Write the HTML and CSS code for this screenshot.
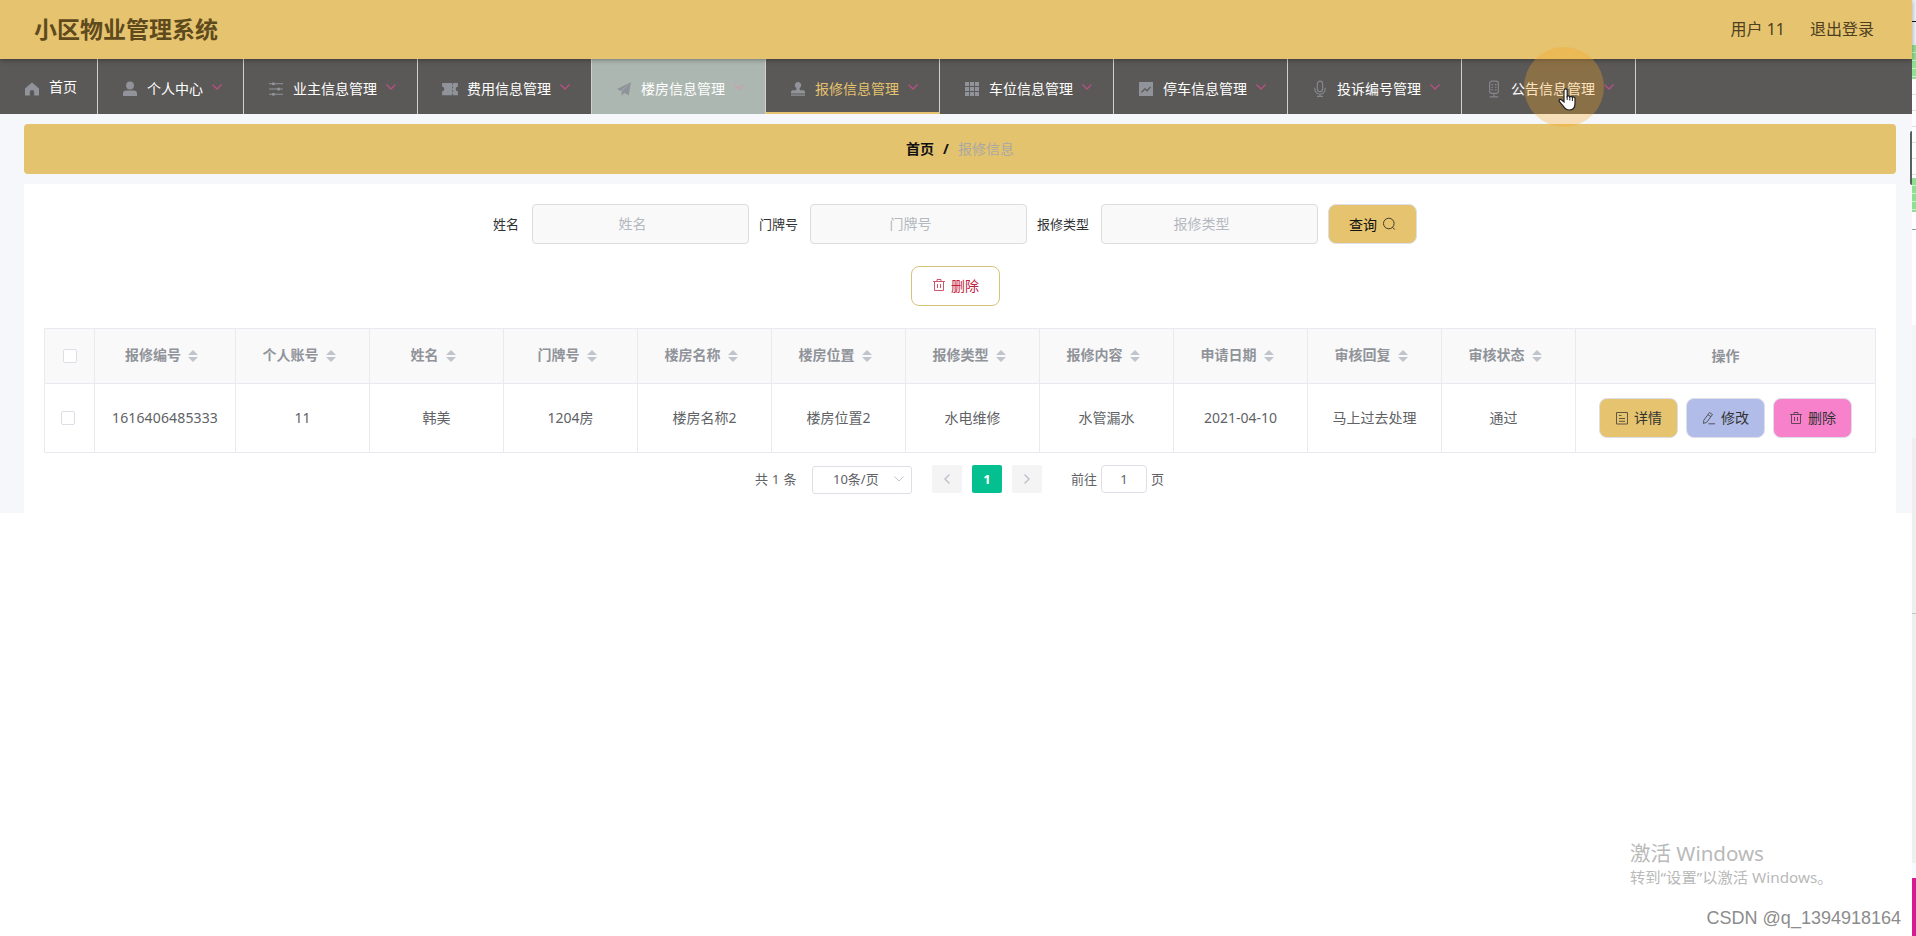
FILE: index.html
```
<!DOCTYPE html>
<html lang="zh-CN">
<head>
  <meta charset="UTF-8">
  <meta name="viewport" content="width=device-width, initial-scale=1.0">
  <title>小区物业管理系统</title>
  <link rel="stylesheet" href="styles.css">
</head>
<body>
  <svg class="sprite">
    <symbol id="arrow" viewBox="0 0 12 12"><path d="M1.500 3.500L6 8l4.500-4.500" fill="none" stroke="currentColor"/></symbol>
    <symbol id="trash" viewBox="0 0 14 14"><path d="M1 3.500h12M5 3.500V1.500h4v2M2.500 3.500v9h9v-9M5.500 6v4M8.500 6v4" fill="none" stroke="currentColor"/></symbol>
  </svg>

  <div class="app">
    <div class="header">
      <h1>小区物业管理系统</h1>
      <div class="user">
        <span>用户 11</span>
        <span>退出登录</span>
      </div>
    </div>

    <div class="nav">
      <div class="nav-item home">
        <svg class="icon" viewBox="0 0 16 16"><path d="M8 .5L0 7.500V15.500h5.500v-4a2.500 2.500 0 0 1 5 0v4H16V7.500z"/></svg>
        <span>首页</span>
      </div>
      <div class="nav-item">
        <svg class="icon" viewBox="0 0 16 16"><circle cx="8" cy="4" r="4.500"/><path d="M0 16v-2.500A3.700 3.700 0 0 1 3.700 9.800h8.600A3.700 3.700 0 0 1 16 13.500V16z"/></svg>
        <span>个人中心</span><svg class="arrow"><use href="#arrow"/></svg>
      </div>
      <div class="nav-item">
        <svg class="icon" viewBox="0 0 16 16"><path d="M0 1.500h16v1.200H0zM0 7.400h16v1.200H0zM0 13.300h16v1.200H0z"/><circle cx="5" cy="2" r="1.800"/><circle cx="11" cy="8" r="1.800"/><circle cx="5" cy="14" r="1.800"/></svg>
        <span>业主信息管理</span><svg class="arrow"><use href="#arrow"/></svg>
      </div>
      <div class="nav-item">
        <svg class="icon" viewBox="0 0 16 16"><path d="M-1 1h11.500v2h1V1H17v4.500a2.500 2.500 0 0 0 0 5V15h-5.500v-2h-1v2H-1v-4.500a2.500 2.500 0 0 0 0-5zM10.500 5v2.200h1V5zM10.500 8.800V11h1V8.800z" fill-rule="evenodd"/></svg>
        <span>费用信息管理</span><svg class="arrow"><use href="#arrow"/></svg>
      </div>
      <div class="nav-item hover">
        <svg class="icon" viewBox="0 0 16 16"><path d="M16 0L0 8l4.300 2.200zM16 0L5.300 10.700V16l2.700-3.500 5.500 2.500z"/></svg>
        <span>楼房信息管理</span><svg class="arrow"><use href="#arrow"/></svg>
      </div>
      <div class="nav-item active">
        <svg class="icon" viewBox="0 0 16 16"><path d="M8 0a3.700 3.700 0 0 1 2.300 6.600c-.8.8-.6 2.200.2 2.900H14a2 2 0 0 1 2 2v1.500H0V11.500a2 2 0 0 1 2-2h3.500c.8-.7 1-2.100.2-2.900A3.700 3.700 0 0 1 8 0zM0 14.300h16v1.300H0z"/></svg>
        <span>报修信息管理</span><svg class="arrow"><use href="#arrow"/></svg>
      </div>
      <div class="nav-item">
        <svg class="icon" viewBox="0 0 16 16"><path d="M0 0h4.700v4.700H0zM5.700 0h4.600v4.700H5.700zM11.300 0H16v4.700h-4.700zM0 5.700h4.700v4.600H0zM5.700 5.700h4.600v4.600H5.700zM11.300 5.700H16v4.600h-4.700zM0 11.300h4.700V16H0zM5.700 11.300h4.600V16H5.700zM11.300 11.300H16V16h-4.700z"/></svg>
        <span>车位信息管理</span><svg class="arrow"><use href="#arrow"/></svg>
      </div>
      <div class="nav-item">
        <svg class="icon" viewBox="0 0 16 16"><path d="M0 0h16v16H0z"/><path d="M2.800 11.800l4-4 2.400 2.200 4-4.500" fill="none" stroke="#5b5957" stroke-width="1.500"/></svg>
        <span>停车信息管理</span><svg class="arrow"><use href="#arrow"/></svg>
      </div>
      <div class="nav-item">
        <svg class="icon line" viewBox="0 0 16 16"><rect x="5" y="-1" width="6" height="12" rx="3"/><path d="M2 6.500v1.500a6 6 0 0 0 12 0V6.500M8 14v2.500M4.500 16.500h7"/></svg>
        <span>投诉编号管理</span><svg class="arrow"><use href="#arrow"/></svg>
      </div>
      <div class="nav-item">
        <svg class="icon line" viewBox="0 0 16 16"><rect x="3" y="-1" width="10" height="14" rx="2.500"/><path d="M5 3h2M9 3h2M5 6h2M9 6h2M5 9h2M9 9h2M8 13v3.500M3 17h10"/></svg>
        <span>公告信息管理</span><svg class="arrow"><use href="#arrow"/></svg>
      </div>
    </div>

    <div class="main">
      <div class="breadcrumb"><b>首页</b><b class="sep">/</b><span>报修信息</span></div>

      <div class="content">
        <div class="search">
          <label>姓名</label><input type="text" placeholder="姓名">
          <label>门牌号</label><input type="text" placeholder="门牌号">
          <label>报修类型</label><input type="text" placeholder="报修类型">
          <button class="btn query">查询
            <svg viewBox="0 0 14 14"><circle cx="6.800" cy="6.500" r="5.300" fill="none" stroke="currentColor"/><path d="M10.500 10.300l2.300 2.300" stroke="currentColor"/></svg>
          </button>
        </div>
        <div class="actions">
          <button class="btn remove"><svg><use href="#trash"/></svg>删除</button>
        </div>

        <table>
          <colgroup>
            <col class="col-check"><col class="col-id">
            <col><col><col><col><col><col><col><col><col><col>
            <col class="col-op">
          </colgroup>
          <thead>
            <tr>
              <th><span class="checkbox"></span></th>
              <th>报修编号<i class="sort"></i></th>
              <th>个人账号<i class="sort"></i></th>
              <th>姓名<i class="sort"></i></th>
              <th>门牌号<i class="sort"></i></th>
              <th>楼房名称<i class="sort"></i></th>
              <th>楼房位置<i class="sort"></i></th>
              <th>报修类型<i class="sort"></i></th>
              <th>报修内容<i class="sort"></i></th>
              <th>申请日期<i class="sort"></i></th>
              <th>审核回复<i class="sort"></i></th>
              <th>审核状态<i class="sort"></i></th>
              <th class="op-title">操作</th>
            </tr>
          </thead>
          <tbody>
            <tr>
              <td class="check"><span class="checkbox"></span></td>
              <td class="number">1616406485333</td>
              <td>11</td>
              <td>韩美</td>
              <td>1204房</td>
              <td>楼房名称2</td>
              <td>楼房位置2</td>
              <td>水电维修</td>
              <td>水管漏水</td>
              <td>2021-04-10</td>
              <td>马上过去处理</td>
              <td class="status">通过</td>
              <td>
                <div class="ops">
                  <button class="btn detail"><svg viewBox="0 0 14 14"><path d="M1.500 1.500h11v11.500h-11zM4 4.500h2.500M4 7.500h6M4 10.300h6" fill="none" stroke="currentColor"/></svg>详情</button>
                  <button class="btn edit"><svg viewBox="0 0 14 14"><path d="M1.800 9.200L7.500 1.500l3 2-5.700 7.700-3.300 1.300zM6 3.700l3 2M6.500 12.800h6.500" fill="none" stroke="currentColor"/></svg>修改</button>
                  <button class="btn del"><svg><use href="#trash"/></svg>删除</button>
                </div>
              </td>
            </tr>
          </tbody>
        </table>

        <div class="pagination">
          <span class="total">共 1 条</span>
          <div class="page-size">10条/页<svg class="arrow"><use href="#arrow"/></svg></div>
          <div class="pager prev"><svg class="arrow"><use href="#arrow"/></svg></div>
          <div class="pager current">1</div>
          <div class="pager next"><svg class="arrow"><use href="#arrow"/></svg></div>
          <span class="jump">前往</span>
          <div class="page-input">1</div>
          <span>页</span>
        </div>
      </div>
    </div>
  </div>

  <!-- edge of the window behind -->
  <div class="edge">
    <div class="edge-top"></div>
    <div class="edge-green"></div>
    <div class="edge-lines"></div>
    <div class="edge-green"></div>
    <div class="edge-white"></div>
    <div class="edge-pale"></div>
    <div class="edge-gray"></div>
    <div class="edge-pink"></div>
  </div>
  <div class="scroll-thumb"></div>

  <div class="pointer-halo"></div>
  <svg class="pointer" viewBox="0 0 18 23"><path d="M6 14V2.500a1.600 1.600 0 0 1 3.200 0V8.500a1.500 1.500 0 0 1 2.600.4 1.500 1.500 0 0 1 2.600.6 1.500 1.500 0 0 1 2.600 1.200V15.500c0 4-2.300 6.500-5.800 6.500-3.300 0-4.500-1.500-6-4L1.300 13.500c-.8-1.700 1-2.800 2.400-1.500z" fill="#fff" stroke="#222" stroke-width="1.200"/><path d="M9.200 8v4M11.800 9v3.500M14.400 9.500V13" stroke="#222"/></svg>

  <div class="activate">
    <div class="activate-title">激活 Windows</div>
    <div class="activate-text">转到“设置”以激活 Windows。</div>
  </div>
  <div class="watermark">CSDN @q_1394918164</div>
</body>
</html>
```
FILE: styles.css
```
* {
  box-sizing: border-box;
}

body {
  margin: 0;
  height: 100vh;
  overflow: hidden;
  display: flex;
  background-color: #fff;
  font-family: "Noto Sans", "Noto Sans CJK SC", sans-serif;
  font-size: 14px;
  color: #606266;
}

.sprite {
  position: absolute;
  width: 0;
  height: 0;
}

.app {
  width: 1912px;
}

.header {
  position: relative;
  z-index: 1;
  height: 59px;
  padding: 0 38px 2px 34px;
  display: flex;
  justify-content: space-between;
  align-items: center;
  background-color: #e5c36f;
  color: #4d3f20;
  box-shadow: 0 1px 5px rgba(0, 0, 0, 0.35);
}

.header h1 {
  margin: 0;
  font-size: 23px;
  line-height: 30px;
  color: #5e4a1c;
}

.user {
  display: flex;
  gap: 25px;
  font-size: 16px;
  line-height: 24px;
}

.nav {
  height: 55px;
  display: flex;
  background-color: #5b5957;
}

.nav-item {
  display: flex;
  align-items: center;
  padding: 4px 20px 0 25px;
  border-right: 1px solid #d0d0d0;
  color: #fff;
  line-height: 20px;
}

.nav-item.home {
  padding: 1px 20px 0 25px;
}

.nav-item.hover {
  background-color: #adb7b1;
}

.nav-item.active {
  padding-top: 6px;
  border-bottom: 2px solid #e5c36f;
  color: #e5c36f;
}

.icon {
  width: 14px;
  height: 14px;
  margin-right: 10px;
  fill: #909399;
  overflow: visible;
}

.home .icon {
  margin-top: 3px;
}

.icon.line {
  fill: none;
  stroke: #85878e;
  stroke-width: 1.3;
}

.arrow {
  width: 12px;
  height: 12px;
}

.nav-item .arrow {
  margin: -4px 0 0 8px;
  color: #b84f83;
  stroke-width: 1.3;
}

.nav-item.hover .arrow {
  color: #cf9dab;
}

.main {
  height: 399px;
  padding: 10px 16px 0 24px;
  background-color: #f5f7fa;
}

.breadcrumb {
  height: 50px;
  padding-bottom: 1px;
  display: flex;
  justify-content: center;
  align-items: center;
  border-radius: 4px;
  background-color: #e4c36f;
  color: #a9a9a3;
  line-height: 20px;
}

.breadcrumb b {
  color: #111;
}

.breadcrumb .sep {
  margin: 0 9px;
}

.content {
  height: 329px;
  margin-top: 10px;
  padding: 20px 20px 0;
  background-color: #fff;
}

.search {
  display: flex;
  align-items: center;
  padding-left: 449px;
}

.search label {
  padding: 0 12px 2px 0;
  font-size: 13px;
  color: #303133;
}

.search label:first-child {
  padding-right: 13px;
}

.search input {
  width: 217px;
  height: 40px;
  margin-right: 10px;
  padding: 0 31px 1px 15px;
  border: 1px solid #dcdcdc;
  border-radius: 4px;
  background-color: #f9f9f9;
  font: inherit;
  text-align: center;
}

.search input::placeholder {
  color: #b4b8c0;
}

.btn {
  width: 79px;
  height: 40px;
  padding: 0 0 1px;
  display: flex;
  justify-content: center;
  align-items: center;
  gap: 5px;
  border: 1px solid #dcdfe6;
  border-radius: 8px;
  font: inherit;
  color: #333;
}

.btn svg {
  width: 14px;
  height: 14px;
  opacity: 0.75;
}

.btn.query {
  width: 89px;
  background-color: #e5c36f;
  color: #111;
}

.actions {
  display: flex;
  justify-content: center;
  padding: 22px 9px 22px 0;
}

.btn.remove {
  width: 89px;
  padding-bottom: 2px;
  border-color: #d6c479;
  background-color: #fff;
  color: #c0203c;
}

table {
  width: 1832px;
  table-layout: fixed;
  border-collapse: collapse;
  text-align: center;
}

col {
  width: 134px;
}

.col-check {
  width: 50px;
}

.col-id {
  width: 141px;
}

.col-op {
  width: 300px;
}

th,
td {
  padding: 0;
  border: 1px solid #e8eaf0;
  line-height: 20px;
}

th {
  height: 55px;
  padding-bottom: 2px;
  background-color: #f9f9f9;
  color: #909399;
}

.op-title {
  padding-bottom: 0;
}

td {
  height: 69px;
}

.number {
  letter-spacing: 0.15px;
}

.check {
  padding: 0 3px 2px 0;
}

.status {
  padding-right: 10px;
}

.checkbox {
  display: inline-block;
  width: 14px;
  height: 14px;
  border: 1px solid #dcdfe6;
  border-radius: 2px;
  background-color: #fff;
  vertical-align: middle;
}

/* pair of triangles after a sortable column title */
.sort {
  display: inline-flex;
  flex-direction: column;
  gap: 2px;
  width: 24px;
  padding-left: 7px;
  vertical-align: middle;
}

.sort::before,
.sort::after {
  content: "";
  width: 0;
  border: 5px solid transparent;
}

.sort::before {
  border-top: 0;
  border-bottom-color: #c0c4cc;
}

.sort::after {
  border-bottom: 0;
  border-top-color: #c0c4cc;
}

.ops {
  display: flex;
  justify-content: center;
  gap: 8px;
}

.detail {
  background-color: #e5c36f;
}

.edit {
  background-color: #b1bde8;
}

.del {
  background-color: #f782cb;
}

.pagination {
  display: flex;
  align-items: center;
  height: 28px;
  margin-top: 12px;
  padding-left: 711px;
  font-size: 13px;
  line-height: 28px;
}

.total {
  width: 42px;
  word-spacing: 0.6px;
}

.page-size {
  display: flex;
  justify-content: space-between;
  align-items: center;
  width: 100px;
  height: 28px;
  margin: 1px 20px 0 15px;
  padding: 0 6px 2px 20px;
  border: 1px solid #dcdfe6;
  border-radius: 3px;
}

.page-size .arrow {
  color: #c0c4cc;
}

.pager {
  display: flex;
  justify-content: center;
  align-items: center;
  width: 30px;
  height: 28px;
  margin-right: 10px;
  border-radius: 2px;
  background-color: #f4f4f5;
  color: #c0c4cc;
  stroke-width: 1.5;
}

.pager.current {
  background-color: #04c091;
  color: #fff;
  font-weight: bold;
}

.prev .arrow {
  transform: rotate(90deg);
}

.next .arrow {
  transform: rotate(-90deg);
}

.jump {
  margin-left: 19px;
}

.page-input {
  width: 46px;
  height: 28px;
  margin: 0 4px;
  border: 1px solid #dcdfe6;
  border-radius: 4px;
  line-height: 26px;
  text-align: center;
}

.edge {
  width: 4px;
  display: flex;
  flex-direction: column;
}

.edge-top {
  height: 45px;
  background: linear-gradient(#eef1f9 21px, #111 21px, #111 22px, #eef1f9 22px);
}

.edge-green {
  height: 34px;
  background: repeating-linear-gradient(#8fe092 0, #8fe092 7px, #c9f2ca 7px, #c9f2ca 8px);
}

.edge-lines {
  height: 99px;
  background: repeating-linear-gradient(#fff 0, #fff 15px, #dde2e0 15px, #dde2e0 16px);
}

.edge-white {
  height: 113px;
  background: linear-gradient(#fff 17px, #8fa3a3 17px, #8fa3a3 18px, #fff 18px);
}

.edge-pale {
  height: 113px;
  background-color: #f3f5f9;
}

.edge-gray {
  height: 440px;
  background: linear-gradient(#efefef 175px, #c4c4c4 175px, #c4c4c4 176px, #efefef 176px, #efefef 425px, #f8f8ff 425px);
}

.edge-pink {
  height: 58px;
  background-color: #d9198f;
}

.scroll-thumb {
  position: absolute;
  left: 1910px;
  top: 131px;
  width: 2px;
  height: 54px;
  border-radius: 2px 0 0 2px;
  background-color: #59605f;
}

.pointer-halo {
  position: absolute;
  z-index: 2;
  left: 1524px;
  top: 47px;
  width: 80px;
  height: 80px;
  border-radius: 50%;
  background-color: rgba(247, 166, 33, 0.3);
}

.pointer {
  position: absolute;
  z-index: 3;
  left: 1558px;
  top: 88px;
  width: 18px;
  height: 23px;
}

.activate {
  position: absolute;
  left: 1630px;
  top: 839px;
  color: #b9b9b9;
}

.activate-title {
  font-size: 20.500px;
  line-height: 28px;
}

.activate-text {
  font-size: 15.300px;
  line-height: 20px;
}

.watermark {
  position: absolute;
  right: 15px;
  top: 906px;
  font-family: "Liberation Sans", Arial, sans-serif;
  font-size: 18px;
  line-height: 24px;
  color: #8c8c8c;
}
```
